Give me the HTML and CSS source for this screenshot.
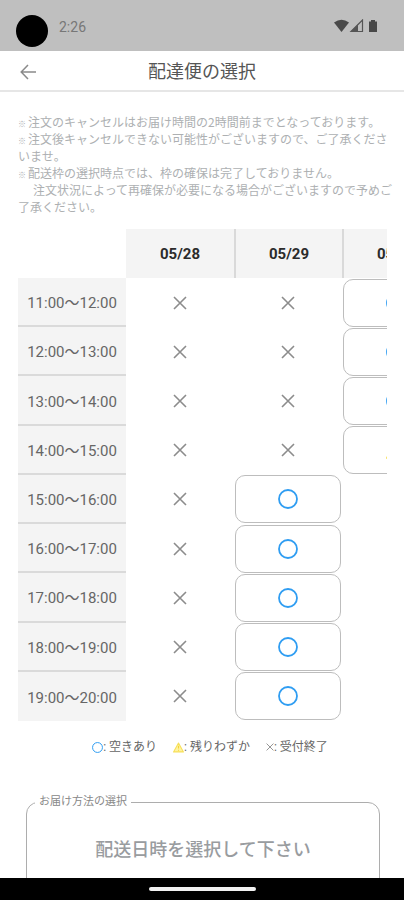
FILE: index.html
```html
<!DOCTYPE html>
<html lang="ja">
<head>
<meta charset="utf-8">
<meta name="viewport" content="width=device-width, initial-scale=1">
<title>配達便の選択</title>
<link rel="stylesheet" href="styles.css">
</head>
<body>
<svg class="defs" aria-hidden="true">
  <symbol id="cross" viewBox="0 0 14 14"><path d="M1 1L13 13M13 1L1 13" fill="none" stroke="#8c8c8c" stroke-width="1.6"/></symbol>
  <symbol id="circle" viewBox="0 0 20 20"><circle cx="10" cy="10" r="9" fill="none" stroke="#2f9df2" stroke-width="1.8"/></symbol>
  <symbol id="warn" viewBox="0 0 20 20"><path d="M10 2L19 18H1Z" fill="#fff3a0" stroke="#f7e05a" stroke-width="2" stroke-linejoin="round"/><path d="M10 7V12M10 14V16" stroke="#f3d437" stroke-width="2"/></symbol>
</svg>
<div class="status">
  <span class="camera"></span>
  <span class="clock">2:26</span>
  <svg class="signals" viewBox="0 0 44 14" aria-hidden="true">
    <path d="M0 3.5Q7.500 -2 15 3.500L7.500 13Z" fill="#4a4a4a"/>
    <path d="M17 12.500L28.500 1V12.500Z" fill="none" stroke="#555" stroke-width="1.200"/>
    <path d="M17 12.500L24 5.500V12.500Z" fill="#555"/>
    <path d="M35 2.500H37V1H41V2.500H43V13H35Z" fill="#484848"/>
  </svg>
</div>
<header class="appbar">
  <button class="back" type="button" aria-label="戻る">
    <svg viewBox="0 0 16 16" aria-hidden="true"><path d="M16 8H1.500M8 1L1.200 8L8 15" fill="none" stroke="#8a8a8a" stroke-width="1.500"/></svg>
  </button>
  <h1>配達便の選択</h1>
</header>
<main>
  <p class="notes"><span class="mark">※</span>注文のキャンセルはお届け時間の2時間前までとなっております。<br><span class="mark">※</span>注文後キャンセルできない可能性がございますので、ご了承くださ<br>いませ。<br><span class="mark">※</span>配送枠の選択時点では、枠の確保は完了しておりません。<br><span class="indent">注文状況によって再確保が必要になる場合がございますので予めご</span><br>了承ください。</p>
  <div class="scroller">
    <table>
      <colgroup><col class="slot"><col class="slot"><col class="slot"><col></colgroup>
      <thead><tr><td></td><th scope="col">05/28</th><th scope="col">05/29</th><th scope="col">05/30</th></tr></thead>
      <tbody>
        <tr><th scope="row">11:00～12:00</th><td><svg class="cross"><use href="#cross"/></svg></td><td><svg class="cross"><use href="#cross"/></svg></td><td><button type="button" aria-label="空きあり"><svg><use href="#circle"/></svg></button></td></tr>
        <tr><th scope="row">12:00～13:00</th><td><svg class="cross"><use href="#cross"/></svg></td><td><svg class="cross"><use href="#cross"/></svg></td><td><button type="button" aria-label="空きあり"><svg><use href="#circle"/></svg></button></td></tr>
        <tr><th scope="row">13:00～14:00</th><td><svg class="cross"><use href="#cross"/></svg></td><td><svg class="cross"><use href="#cross"/></svg></td><td><button type="button" aria-label="空きあり"><svg><use href="#circle"/></svg></button></td></tr>
        <tr><th scope="row">14:00～15:00</th><td><svg class="cross"><use href="#cross"/></svg></td><td><svg class="cross"><use href="#cross"/></svg></td><td><button type="button" aria-label="残りわずか"><svg><use href="#warn"/></svg></button></td></tr>
        <tr><th scope="row">15:00～16:00</th><td><svg class="cross"><use href="#cross"/></svg></td><td><button type="button" aria-label="空きあり"><svg><use href="#circle"/></svg></button></td><td></td></tr>
        <tr><th scope="row">16:00～17:00</th><td><svg class="cross"><use href="#cross"/></svg></td><td><button type="button" aria-label="空きあり"><svg><use href="#circle"/></svg></button></td><td></td></tr>
        <tr><th scope="row">17:00～18:00</th><td><svg class="cross"><use href="#cross"/></svg></td><td><button type="button" aria-label="空きあり"><svg><use href="#circle"/></svg></button></td><td></td></tr>
        <tr><th scope="row">18:00～19:00</th><td><svg class="cross"><use href="#cross"/></svg></td><td><button type="button" aria-label="空きあり"><svg><use href="#circle"/></svg></button></td><td></td></tr>
        <tr><th scope="row">19:00～20:00</th><td><svg class="cross"><use href="#cross"/></svg></td><td><button type="button" aria-label="空きあり"><svg><use href="#circle"/></svg></button></td><td></td></tr>
      </tbody>
    </table>
  </div>
  <div class="key">
    <span><svg><use href="#circle"/></svg>: 空きあり</span>
    <span><svg><use href="#warn"/></svg>: 残りわずか</span>
    <span><svg class="small"><use href="#cross"/></svg>: 受付終了</span>
  </div>
  <fieldset>
    <legend>お届け方法の選択</legend>
    <p>配送日時を選択して下さい</p>
  </fieldset>
</main>
<div class="navbar"><span></span></div>
</body>
</html>
```
FILE: styles.css
```css
* { box-sizing: border-box; }
body {
  margin: 0;
  height: 100vh;
  display: flex;
  flex-direction: column;
  overflow: hidden;
  background: #fff;
  color: #666;
  font-family: Roboto, "Noto Sans CJK JP", sans-serif;
}
.defs { display: none; }
svg { display: block; }
button { font: inherit; cursor: pointer; }

.status {
  flex: none;
  height: 51px;
  padding: 12px 26px 0 16px;
  display: flex;
  align-items: flex-start;
  background: #bfbfbf;
}
.camera {
  width: 32px;
  height: 32px;
  margin-top: 3px;
  border-radius: 50%;
  background: #000;
}
.clock {
  margin-left: 11px;
  font-size: 14px;
  line-height: 30px;
  color: #777;
}
.signals { width: 44px; height: 14px; margin: 7px 0 0 auto; }

.appbar {
  flex: none;
  height: 41px;
  padding: 2px 20px 0;
  display: grid;
  grid-template-columns: 16px 1fr 16px;
  align-items: center;
  border-bottom: 2px solid #e6e6e6;
}
.back { padding: 0; border: 0; background: none; }
.back svg { width: 16px; height: 16px; }
h1 {
  margin: 0;
  font-size: 18px;
  line-height: 26px;
  font-weight: 400;
  text-align: center;
  color: #555;
}

main { flex: 1; min-height: 0; overflow: hidden; padding: 21px 17px 0 18px; }
.notes {
  margin: 0 0 14px;
  font-family: "Noto Sans CJK JP", sans-serif;
  font-size: 12px;
  line-height: 17px;
  white-space: nowrap;
  color: #adb0b2;
}
.mark {
  display: inline-block;
  width: 10px;
  font-size: 8px;
  line-height: 12px;
  font-weight: 700;
}
.indent { padding-left: 15px; }

.scroller { overflow: hidden; }
.slot { width: 108px; }
table {
  width: 432px;
  height: 492px;
  table-layout: fixed;
  border-collapse: separate;
  border-spacing: 0;
}
tr { height: 49px; }
th, td { padding: 0; font-size: 15px; text-align: center; vertical-align: middle; }
thead th { background: #f4f4f4; font-weight: 700; color: #2b2b2b; }
thead th + th { border-left: 2px solid #d9d9d9; }
tbody th { background: #f4f4f4; font-weight: 400; color: #666; white-space: nowrap; }
tbody tr:not(:last-child) th { border-bottom: 2px solid #dadada; }
td svg { width: 20px; height: 20px; margin: 0 auto; }
td .cross { width: 14px; height: 14px; }
td button {
  display: block;
  width: 106px;
  height: 48px;
  margin: 0 auto;
  padding: 0;
  border: 1px solid #bdbdbd;
  border-radius: 10px;
  background: #fff;
}

.key {
  margin-top: 17px;
  padding-left: 15px;
  display: flex;
  justify-content: center;
  gap: 16px;
  font-size: 12px;
  line-height: 18px;
}
.key span { display: flex; align-items: center; }
.key svg { width: 11px; height: 11px; }
.key .small { width: 8px; height: 8px; }

fieldset {
  margin: 36px 7px 0 8px;
  padding: 0 8px;
  height: 140px;
  border: 1px solid #adadad;
  border-radius: 12px;
}
legend { padding: 0 4px; font-size: 11px; line-height: 20px; color: #888; }
fieldset p {
  margin: 24px 0 0;
  font-size: 18px;
  line-height: 28px;
  font-weight: 500;
  text-align: center;
  color: #999c9f;
}

.navbar {
  flex: none;
  height: 22px;
  display: flex;
  align-items: center;
  justify-content: center;
  background: #000;
}
.navbar span { width: 107px; height: 4px; border-radius: 2px; background: #f2f2f2; }
```
